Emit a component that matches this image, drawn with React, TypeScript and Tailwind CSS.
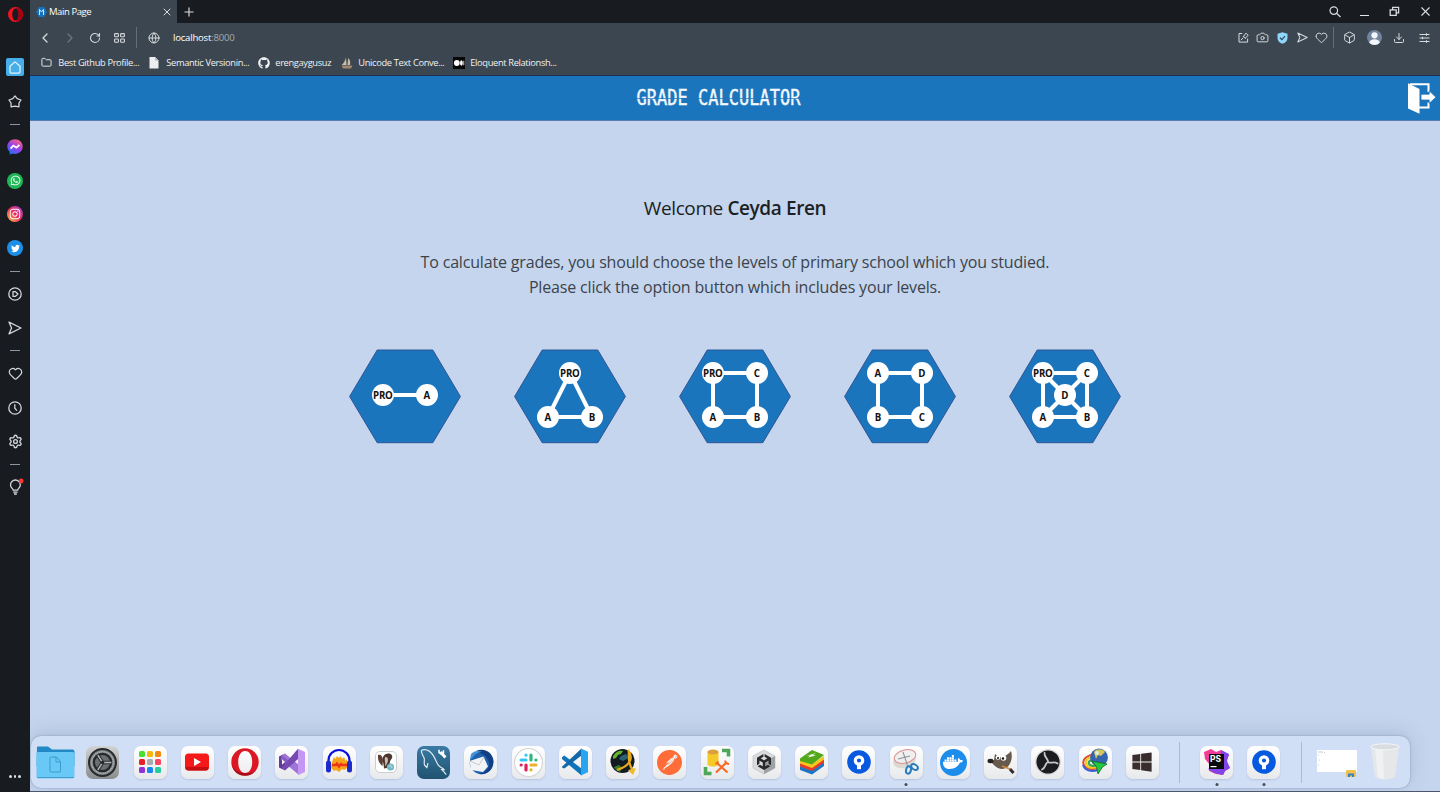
import React from "react";
import {
  FaWhatsapp, FaInstagram, FaTwitter, FaGithub, FaDocker, FaWindows, FaUnity,
} from "react-icons/fa6";
import { SiPostman } from "react-icons/si";
import {
  Box, Camera, ChevronLeft, ChevronRight, Download, Globe, Heart, Plus, Search, Settings, X, RotateCw, Folder,
} from "lucide-react";

type Kids = { children?: React.ReactNode };

/* ---------- Sidebar ---------- */

const Slot = ({ children }: Kids) => (
  <div className="flex h-[33.7px] w-full shrink-0 items-center justify-center">{children}</div>
);
const Dash = () => (
  <div className="flex h-[12.300px] w-full shrink-0 items-center justify-center">
    <div className="h-px w-2.5 bg-[#8f979e]" />
  </div>
);

function SendIcon({ size }: { size: number }) {
  return (
    <svg width={size} height={size} viewBox="0 0 14 14" fill="none" stroke="currentColor" strokeWidth="1.3" strokeLinejoin="round">
      <path d="M1 1.2 13 7 1 12.8 3.6 7Z" />
    </svg>
  );
}

function Sidebar() {
  return (
    <aside className="flex h-full w-[30px] shrink-0 flex-col items-center bg-[#181c21] text-[#d3d7da]">
      <div className="flex h-[50.600px] w-full shrink-0 justify-center pt-[7px]">
        <svg width="15" height="15" viewBox="0 0 15 15">
          <path fillRule="evenodd" fill="#f2141f" d="M7.5 0a7.5 7.5 0 1 0 0 15 7.5 7.5 0 0 0 0-15Zm0 1.5c1.9 0 3.2 2.6 3.2 6s-1.3 6-3.2 6-3.2-2.6-3.2-6 1.3-6 3.2-6Z" />
          <path fill="#a70014" d="M7.5 1.5c1.9 0 3.2 2.6 3.2 6s-1.3 6-3.2 6a5 5 0 0 0 2.6 1 7.5 7.5 0 0 0 0-14 5 5 0 0 0-2.6 1Z" />
        </svg>
      </div>
      <Slot>
        <div className="flex size-[18px] items-center justify-center rounded-[2px] bg-[#46aee9]">
          <svg width="12" height="13" viewBox="0 0 12 13" fill="none" stroke="#e4f4fd" strokeWidth="1.2" strokeLinejoin="round">
            <path d="M6 .9 11 5.3V11q0 1.1-1.1 1.1H2.1Q1 12.100 1 11V5.300Z" />
          </svg>
        </div>
      </Slot>
      <Slot>
        <svg width="14" height="13" viewBox="0 0 14 13" fill="none" stroke="currentColor" strokeWidth="1.3" strokeLinejoin="round">
          <path d="M7 .9 9.200 3.600 13 5 11 8 10.900 11.800 7 11.200 3.100 11.800 3 8 1 5 4.800 3.600Z" />
        </svg>
      </Slot>
      <Dash />
      <Slot>
        <svg width="16" height="16" viewBox="0 0 16 16">
          <defs>
            <linearGradient id="msg" x1="0.2" y1="1" x2="0.8" y2="0">
              <stop offset="0" stopColor="#1479f0" /><stop offset=".5" stopColor="#9a3ff0" /><stop offset="1" stopColor="#ff6470" />
            </linearGradient>
          </defs>
          <path fill="url(#msg)" d="M8 .3C3.600.3.300 3.400.300 7.600c0 2.200.9 4 2.400 5.300V15.800l2.600-1.200c.9.2 1.700.3 2.700.3 4.400 0 7.700-3.100 7.700-7.300S12.400.3 8 .3Z" />
          <path fill="none" stroke="#fff" strokeWidth="1.800" d="M3.600 9.600 6.300 6.600 9.400 8.600 12.400 5.800" />
        </svg>
      </Slot>
      <Slot>
        <div className="flex size-4 items-center justify-center rounded-full bg-[#1fb755] text-white"><FaWhatsapp size={11} /></div>
      </Slot>
      <Slot>
        <div className="flex size-4 items-center justify-center rounded-full bg-linear-to-tr from-[#fdbb2d] via-[#e8245c] to-[#9b30d0] text-white"><FaInstagram size={12} /></div>
      </Slot>
      <Slot>
        <div className="flex size-4 items-center justify-center rounded-full bg-[#1b8fe8] text-white"><FaTwitter size={9} /></div>
      </Slot>
      <Dash />
      <Slot>
        <svg width="14" height="14" viewBox="0 0 14 14" fill="none" stroke="currentColor" strokeWidth="1.300" strokeLinejoin="round">
          <circle cx="7" cy="7" r="6.200" /><path d="M5 4.600h2.200L10 7 7.200 9.400H5Z" />
        </svg>
      </Slot>
      <Slot><SendIcon size={14} /></Slot>
      <Dash />
      <Slot><Heart size={15} strokeWidth={2} /></Slot>
      <Slot>
        <svg width="14" height="14" viewBox="0 0 14 14" fill="none" stroke="currentColor" strokeWidth="1.300">
          <circle cx="7" cy="7" r="6.200" /><path d="M6.800 3.200V7.200L9 9.600" />
        </svg>
      </Slot>
      <Slot><Settings size={15} strokeWidth={2.200} /></Slot>
      <Dash />
      <Slot>
        <svg width="18" height="18" viewBox="0 0 18 18" fill="none" stroke="currentColor" strokeWidth="1.300">
          <path d="M7.200 12.200C7.200 10.600 4.500 9.700 4.500 6.900a4.900 4.900 0 0 1 9.800 0c0 2.800-2.700 3.700-2.700 5.300Z" />
          <path d="M7.200 14.200h4.400M8 16h2.800" />
          <circle cx="15.200" cy="3" r="2.400" fill="#ff3434" stroke="none" />
        </svg>
      </Slot>
      <div className="mt-auto mb-[14.500px] flex gap-[2px]">
        <i className="size-[2.500px] rounded-full bg-[#d8dcdf]" />
        <i className="size-[2.500px] rounded-full bg-[#d8dcdf]" />
        <i className="size-[2.500px] rounded-full bg-[#d8dcdf]" />
      </div>
    </aside>
  );
}

/* ---------- Browser chrome ---------- */

function TabBar() {
  return (
    <div className="flex h-[23px] shrink-0 items-center bg-[#181b1f] text-[#d9dcdf]">
      <div className="flex h-full w-[147px] items-center bg-[#3b4650] pl-1.5">
        <svg width="11" height="10" viewBox="0 0 11 10">
          <path fill="#1873bd" d="M2.800 0h5.400L11 5 8.200 10H2.800L0 5Z" />
          <path stroke="#cfe5f7" fill="none" d="M3.500 8V2.500L5.500 5l2-2.500V8" />
        </svg>
        <span className="mt-[2px] ml-[2px] flex-1 text-[9.500px] tracking-[-0.420px] whitespace-nowrap text-white">Main Page</span>
        <X size={12} strokeWidth={2} className="mr-[4px]" />
      </div>
      <Plus size={14} strokeWidth={2} className="ml-[5px]" />
      <div className="ml-auto flex items-center">
        <svg width="12" height="12" viewBox="0 0 12 12" fill="none" stroke="currentColor" strokeWidth="1.200">
          <circle cx="4.800" cy="4.600" r="3.800" /><path d="M7.500 7.300 11.500 11" />
        </svg>
        <div className="mt-[8px] ml-[19px] h-px w-[9px] bg-[#e4e6e8]" />
        <svg className="ml-[20.500px]" width="11" height="11" viewBox="0 0 11 11" fill="none" stroke="currentColor" strokeWidth="1.300">
          <path d="M1.200 3.800h6v5.600h-6zM3.600 3.800V1.400h6v5.400H7.200" />
        </svg>
        <X size={15} strokeWidth={1.800} className="mr-[7.500px] ml-[17.500px]" />
      </div>
    </div>
  );
}

function Toolbar() {
  return (
    <div className="flex h-[29px] shrink-0 items-center bg-[#3b4650] text-[#d6dadd]">
      <ChevronLeft size={16} strokeWidth={1.900} className="ml-[7px]" />
      <ChevronRight size={16} strokeWidth={1.900} className="ml-[9px] text-[#6d7780]" />
      <RotateCw size={12} strokeWidth={2.200} className="ml-[11px]" />
      <svg className="ml-[13px]" width="11" height="10" viewBox="0 0 11 10" fill="none" stroke="currentColor" strokeWidth="1.100">
        <rect x=".6" y=".6" width="3.800" height="3.200" rx=".8" /><rect x="6.600" y=".6" width="3.800" height="3.200" rx=".8" />
        <rect x=".6" y="6" width="3.800" height="3.200" rx=".8" /><rect x="6.600" y="6" width="3.800" height="3.200" rx=".8" />
      </svg>
      <div className="ml-[11px] h-[21px] w-px bg-[#646e77]" />
      <Globe size={12} strokeWidth={2} className="ml-[11px]" />
      <span className="mt-[2px] ml-[13px] text-[9.600px] tracking-[-0.230px] whitespace-nowrap text-white">localhost<span className="text-[#a4acb3]">:8000</span></span>
      <div className="ml-auto flex items-center">
        <svg width="11" height="11" viewBox="0 0 11 11" fill="none" stroke="currentColor" strokeWidth="1">
          <path d="M4.200 1.500H1v8.600h8.600V6.600M3 8.200l2.200-2.500M5 4l2.600 2.700M5.500 4.300 8 1.200l2.200 2.200L7.200 6" />
        </svg>
        <Camera size={13} strokeWidth={1.800} className="ml-[7.500px]" />
        <svg className="ml-[8px]" width="11" height="12" viewBox="0 0 11 12">
          <path fill="#8fd5fb" d="M5.500.2 10.500 1.800V6c0 2.900-2.200 4.900-5 5.800C2.700 10.900.5 8.900.5 6V1.800Z" />
          <path d="M3 5.800 4.900 7.600 8 4.200" fill="none" stroke="#2c465a" strokeWidth="1.200" />
        </svg>
        <span className="ml-[9px]"><SendIcon size={11} /></span>
        <Heart size={13} strokeWidth={1.800} className="ml-[7px]" />
        <div className="ml-[5px] h-[21px] w-px bg-[#646e77]" />
        <Box size={13} strokeWidth={1.800} className="ml-[9px]" />
        <svg className="ml-[11px]" width="15" height="15" viewBox="0 0 15 15">
          <clipPath id="av"><circle cx="7.500" cy="7.500" r="7.500" /></clipPath>
          <g clipPath="url(#av)"><rect width="15" height="15" fill="#70849b" /><circle cx="7.500" cy="5.300" r="3.100" fill="#f2f6fb" /><ellipse cx="7.500" cy="13.500" rx="5.600" ry="4.300" fill="#f2f6fb" /></g>
        </svg>
        <Download size={12} strokeWidth={2} className="ml-[11px]" />
        <svg className="mr-[10px] ml-[14px]" width="11" height="10" viewBox="0 0 11 10" fill="none" stroke="currentColor" strokeWidth="1.100">
          <path d="M.5 1.500h10M.5 5h10M.5 8.500h10M7.500.2v2.600M3.500 3.700v2.600M7.500 7.200v2.600" />
        </svg>
      </div>
    </div>
  );
}

const Mark = ({ icon, text, cls }: { icon: React.ReactNode; text: string; cls: string }) => (
  <div className={"flex shrink-0 items-center " + cls}>
    <span className="flex w-[17.300px] shrink-0">{icon}</span>
    <span className="text-[9.300px] tracking-[-0.350px] whitespace-nowrap">{text}</span>
  </div>
);

function Bookmarks() {
  return (
    <div className="flex h-[24px] shrink-0 items-center border-b border-[#1d2f4f] bg-[#3b4650] pb-[2px] pl-[11px] text-[#f0f2f4]">
      <Mark cls="w-[108px]" icon={<Folder size={11} strokeWidth={2} />} text="Best Github Profile..." />
      <Mark cls="w-[109px]" icon={<svg width="10" height="12" viewBox="0 0 10 12"><path fill="#eceeef" d="M.5 0h5.700L9.500 3.500V11.500H.5Z" /><path fill="#aeb4b9" d="M6.200 0v3.500h3.300Z" /></svg>} text="Semantic Versionin..." />
      <Mark cls="w-[83px]" icon={<FaGithub size={12} />} text="erengaygusuz" />
      <Mark cls="w-[112px]" icon={<svg width="12" height="12" viewBox="0 0 12 12"><path fill="#c9bba8" d="M5 .5 5.600 8H.7C2.800 6 4.200 4 5 .5ZM7.200 1c2 2 2.400 4.600 1.800 7H6.500Z" /><path fill="#a08870" d="M.5 8.500h11L10 11.500H2Z" /></svg>} text="Unicode Text Conve..." />
      <Mark cls="" icon={<svg width="12" height="12" viewBox="0 0 12 12"><rect width="12" height="12" fill="#060606" /><circle cx="3.800" cy="6" r="2.900" fill="#fff" /><ellipse cx="8.400" cy="6" rx="1.400" ry="2.700" fill="#fff" /><rect x="10.400" y="3.700" width=".8" height="4.600" fill="#fff" /></svg>} text="Eloquent Relationsh..." />
    </div>
  );
}

/* ---------- Page ---------- */

function Header() {
  return (
    <header className="grid h-[45px] shrink-0 grid-cols-[1fr_auto_1fr] items-center border-b border-[#5a7cb5] bg-[#1b75bc]">
      <div />
      <h1 className="relative mr-[33px] font-['DejaVu_Sans_Mono',monospace] text-[17px] leading-none whitespace-nowrap text-[#f2f8fd] [-webkit-text-stroke:0.350px_#f2f8fd]">
        <span className="block scale-y-[1.220]">GRADE CALCULATOR</span>
        <span className="absolute top-[8px] left-0 h-px w-full bg-[#1b75bc]/70" />
      </h1>
      <svg className="mr-[4.500px] justify-self-end" width="28" height="31" viewBox="0 0 28 31">
        <path d="M2 1.200H20.500V9M20.500 19.500V24.500H11" fill="none" stroke="#fff" strokeWidth="2" />
        <path fill="#fff" d="M0 .2 11.500 6V30.800L0 25.400Z" />
        <path fill="#fff" stroke="#1b75bc" strokeWidth=".8" d="M13 11.200h8.200V7.800L28 14.200l-6.800 6.200V17H13Z" />
      </svg>
    </header>
  );
}

type Node = [string, number, number];
type Graph = { nodes: Node[]; edges: [number, number][] };

const L = 34, C = 56, R = 78, T = 24, M = 46, B = 68;

const graphs: Graph[] = [
  { nodes: [["PRO", L, M], ["A", R, M]], edges: [[0, 1]] },
  { nodes: [["PRO", C, T], ["A", L, B], ["B", R, B]], edges: [[0, 1], [1, 2], [2, 0]] },
  { nodes: [["PRO", L, T], ["C", R, T], ["B", R, B], ["A", L, B]], edges: [[0, 1], [1, 2], [2, 3], [3, 0]] },
  { nodes: [["A", L, T], ["D", R, T], ["C", R, B], ["B", L, B]], edges: [[0, 1], [1, 2], [2, 3], [3, 0]] },
  { nodes: [["PRO", L, T], ["C", R, T], ["B", R, B], ["A", L, B], ["D", C, M]], edges: [[0, 1], [1, 2], [2, 3], [3, 0], [0, 2], [1, 3]] },
];

function Hexagon({ nodes, edges }: Graph) {
  return (
    <button className="block">
      <svg width="112" height="95" viewBox="0 0 112 95">
        <path d="M28.200 1H83.800L111.400 47.500 83.800 93.700H28.200L.6 47.500Z" fill="#1b75bc" stroke="#2f5597" />
        {edges.map(([a, b]) => (
          <line key={a + "-" + b} x1={nodes[a][1]} y1={nodes[a][2]} x2={nodes[b][1]} y2={nodes[b][2]} stroke="#fff" strokeWidth="4" />
        ))}
        {nodes.map(([label, x, y]) => (
          <g key={label}>
            <circle cx={x} cy={y} r="11" fill="#fff" />
            <text x={x - 0.2} y={y + 3.500} textAnchor="middle" fill="#111" className="font-['Open_Sans',sans-serif] text-[9.700px] font-bold tracking-[-0.250px]">{label}</text>
          </g>
        ))}
      </svg>
    </button>
  );
}

/* ---------- Dock ---------- */

const Item = ({ children, bare, running }: Kids & { bare?: boolean; running?: boolean }) => (
  <div className="relative flex h-full w-[47.250px] shrink-0 items-center justify-center">
    {bare ? children : (
      <div className="flex size-[33px] items-center justify-center rounded-[7px] bg-linear-to-b from-white to-[#e8e9ec] shadow-[0_1px_2px_rgba(80,90,110,0.200)]">{children}</div>
    )}
    {running && <i className="absolute bottom-[2px] left-1/2 size-[3px] -translate-x-1/2 rounded-full bg-[#454b55]" />}
  </div>
);
const Draw = ({ children, s = 28 }: Kids & { s?: number }) => (
  <svg width={s} height={s} viewBox="0 0 28 28" fill="none">{children}</svg>
);
const Divider = ({ cls }: { cls: string }) => (
  <div className={"flex h-full shrink-0 items-center justify-center " + cls}><div className="h-[41px] w-px bg-[#adbad0]" /></div>
);
const Pin = () => (
  <Draw>
    <circle cx="14" cy="14" r="11.800" fill="#0759df" />
    <circle cx="14" cy="12.500" r="3.700" stroke="#fff" strokeWidth="3.200" />
    <rect x="12" y="16" width="4" height="5.200" fill="#fff" />
  </Draw>
);

const tiles = ["#48df30", "#f4b90c", "#f18a10", "#e8202a", "#a8abb0", "#fa4660", "#9330d8", "#1488f2", "#27cda0"];

function Dock() {
  return (
    <nav className="mx-px mb-[3px] flex h-[52px] w-[1379px] items-center rounded-[10px] bg-[#d1dff6] pl-[1px] shadow-[0_0_2px_#8291ab,0_-3px_18px_rgba(95,115,150,0.250)]">
      <Item bare>
        <svg width="39" height="33" viewBox="0 0 39 33">
          <path fill="#218ac6" d="M1 1.500Q1 .5 2 .5H12L16 3.500H36.500Q38.500 3.500 38.500 5.500V20H.5Z" />
          <rect x=".5" y="6" width="38" height="26.500" rx="2" fill="#69c8f6" />
          <path d="M1 31.500h37" stroke="#429fce" />
          <path d="M15.500 11h5l4 4.500V25q0 1-1 1h-8q-1.500 0-1.500-1V12q0-1 1.500-1ZM20 11v5h4.500" fill="none" stroke="#399cd0" />
        </svg>
      </Item>
      <Item bare>
        <div className="flex size-[33px] items-center justify-center rounded-[7px] bg-linear-to-b from-[#d2d3d4] to-[#8b8c8e]">
          <Draw s={31}>
            <circle cx="14" cy="14" r="12.200" fill="#7e8184" stroke="#292c2f" strokeWidth="1.800" />
            <circle cx="14" cy="14" r="9.800" stroke="#b2b5b7" strokeWidth="1.300" strokeDasharray="1 .7" />
            <circle cx="14" cy="14" r="7.800" fill="#6c6f72" stroke="#26292c" strokeWidth="2" />
            <path d="M14 14H22M14 14 9.800 7.400M14 14 9.800 20.600" stroke="#2b2e31" strokeWidth="3.200" />
            <path d="M14 14H22M14 14 9.800 7.400M14 14 9.800 20.600" stroke="#b4b7b9" strokeWidth="1.300" />
            <circle cx="14" cy="14" r="1.600" fill="#26292c" />
          </Draw>
        </div>
      </Item>
      <Item>
        <div className="grid grid-cols-3 gap-[2px]">
          {tiles.map((c) => <i key={c} className="size-[6.200px] rounded-[1.500px]" style={{ background: c }} />)}
        </div>
      </Item>
      <Item><Draw><rect x="2" y="5.500" width="24" height="17" rx="3.500" fill="#f51919" /><path d="M2.500 19q0 3.500 3 3.500h17q3 0 3-3.500" fill="#c60f12" /><path d="M11 10v8l7-4Z" fill="#fff" /></Draw></Item>
      <Item><Draw><path fillRule="evenodd" fill="#dc1824" d="M14 .3a13.700 13.700 0 1 0 0 27.400A13.700 13.700 0 0 0 14 .3Zm.2 2.700c4.400 0 7 4.800 7 11s-2.600 11-7 11-7-4.800-7-11 2.600-11 7-11Z" /><path fill="#8e0613" d="M1 17C2 24 8 28 14 27.700c5 0 9-2 11.500-6-4 4-7.500 3.300-9.500 3C9 26 4 23 1 17Z" opacity=".65" /></Draw></Item>
      <Item><Draw><path fill="#613b99" d="M1 8.500 4 7l8 7-8 7-3-1.500Z" /><path fill="#8e60cf" d="m3.500 7 3.500-1.500L21 17v10L2.500 11.500Z" opacity=".85" /><path fill="#764ab1" d="M3 20.500 20 .8V11L7 22.500Z" /><path fill="#c696f5" d="m20 .8 7 3.200v20l-7 3.200Z" /><path fill="#f4f2f7" d="m4 11.300 3 2.700-3 2.700Z" /></Draw></Item>
      <Item><Draw><path fill="#f6a41c" d="m7 14 2-5 1.500 2L12 8l2 2 1.500-2L17 11l2-2 1.500 4L22 11v9l-3 2-2-1-3 3-3-2-2 1-3-3Z" /><path stroke="#ef341c" strokeWidth="2.300" d="M7 17h4l1-1.500 2 3 2-2.500 1 1h5" /><path d="M3.500 16V12.500a10.500 10.500 0 0 1 21 0v3.500" stroke="#0a10dc" strokeWidth="2.200" /><rect x="1" y="12.500" width="5" height="12" rx="2.500" fill="#1b2bcc" /><rect x="22" y="12.500" width="5" height="12" rx="2.500" fill="#1b2bcc" /></Draw></Item>
      <Item><Draw><rect x="3.500" y="3.500" width="21" height="21" rx="4.500" fill="#fff" stroke="#cdced0" /><path fill="#5c4035" d="M6 7c3-1 5 2 5 6l-.5 5c-3-2-5-6-4.500-11Z" /><path fill="#4a362e" d="M11 9c2-4 7-4.500 9-1.500 1 3-1 3-2 6 0 3-2 7-6 7 0-4-2-8-1-11.500Z" /><path fill="#cdbcae" d="M13 9.500c1-1 3 0 3 2s-1 5-3 7c1-4-1-6 0-9Z" /><circle cx="18.500" cy="19" r="3.600" fill="#6fb7c2" /><path d="m16.600 19 1.200-1.200h1.500l1 1.200-1 1.200" stroke="#d3eef2" strokeWidth=".8" /></Draw></Item>
      <Item bare>
        <div className="flex size-[33px] items-center justify-center rounded-[7px] bg-linear-to-b from-[#397aa5] to-[#20536f]">
          <Draw s={31}>
            <path d="M3 3c4-1.500 8 .5 11 5 2 3 2.500 6 4.500 8.500 1.500 2 4 2.500 5 4L21.500 20.500l2 2 2 2.500M3 3c0 3 1.500 4.500 2.500 7 .8 2-.5 4.500.5 6.500l2 2 1-4" stroke="#dbe8f0" strokeWidth="1.100" />
            <path d="m20.300 4.500 4.500 5" stroke="#fff" strokeWidth="2.600" />
            <path d="M19 2.500v2.500l2 1.500 2-1V3" stroke="#fff" strokeWidth="1.400" />
          </Draw>
        </div>
      </Item>
      <Item><Draw><circle cx="14.500" cy="14.500" r="11.800" fill="#1e62ae" /><path fill="#123e83" d="M9 3c9-4 17 2 17.500 10C26 23 19 27 12 26c9-2 12-9 9-14C19 7 14 5 9 3Z" /><path fill="#3f95d8" d="M4 6c3-3 7-4 11-2-4 0-7 2-9 5L3 12Z" /><path fill="#f2f3f6" d="m2.500 13 14-4.500 4.500 10-5 5.500-12-2Z" /><path stroke="#bdc3cc" strokeWidth=".9" d="m3 13 9 4 5-8" /></Draw></Item>
      <Item>
        <Draw s={31}>
          <circle cx="14" cy="14" r="12.600" fill="#fff" stroke="#d3d4d6" />
          <g transform="translate(1.400 1.400) scale(.9)" strokeWidth="3.200" strokeLinecap="round">
            <path d="M6.500 11.500h5M11.500 6.600v.1" stroke="#36c5f0" />
            <path d="M16.500 6.500v5M21.400 11.500h.1" stroke="#2eb67d" />
            <path d="M16.500 16.500h5M16.500 21.400v.1" stroke="#ecb22e" />
            <path d="M11.500 16.500v5M6.600 16.500h.1" stroke="#e01e5a" />
          </g>
        </Draw>
      </Item>
      <Item><Draw><path fill="#0f75bb" d="m1 9.200 2.300-1.800L20.500 20.500v7L1 11Z" /><path fill="#1268a9" d="M1 18.800 20.500.5v7L3.300 20.600 1 19.500Z" /><path fill="#29a5ef" d="m20 .5 7 3.300v20.400l-7 3.300Z" /></Draw></Item>
      <Item><Draw><circle cx="13.500" cy="13" r="12" fill="#121b21" /><path fill="#61b52b" d="M4 8c3-5 7-6 10-5l-2 3-3 1-2 3-3 1Z" /><path fill="#3d7a25" d="m5 19 5-2 3 3-2 4c-3-1-5-3-6-5Z" /><path fill="#296277" d="m12 8 5-2 2 4-5 3-4-2Z" /><path d="M19 2c6 8 2 16-11 20M20 3c-1 8 0 14 4 20" stroke="#e6a91c" strokeWidth="2.200" /><path fill="#f0b92a" d="m19 22 8-2-3 7Z" /></Draw></Item>
      <Item><SiPostman size={25} color="#ff6c37" /></Item>
      <Item><Draw><path d="M19 2.500h6.500v6M2.500 19v6.500h6" stroke="#50a658" strokeWidth="3.600" /><path fill="#f5c928" d="M4.500 4v13q5.500 3.500 11 0V4Z" /><ellipse cx="10" cy="4" rx="5.500" ry="2.500" fill="#dba03d" /><path d="m14 15 10.500 9.500M24 14 13 24.500" stroke="#f26c2a" strokeWidth="2.200" /><path d="m12.500 16 3-2.500M22 12.500l1 3 3 .5" stroke="#f26c2a" strokeWidth="1.800" /></Draw></Item>
      <Item><Draw><path fill="#dadbdc" stroke="#b9bbbd" strokeWidth=".6" d="m14 2 11 6v12l-11 6-11-6V8Z" /><path fill="#9fa2a5" d="M14 14 25 8v12l-11 6Z" /></Draw><FaUnity size={16} color="#28292b" className="absolute" /></Item>
      <Item><Draw><path fill="#1c75c7" d="m2 18 12 4 12-8v4L14 26.500 2 22Z" /><path fill="#e53c2a" d="m2 15 12 4 12-8v3.500L14 23 2 18.500Z" /><path fill="#f7c61c" d="m2 12 12 4 12-8v3.500L14 20 2 15.500Z" /><path fill="#52a818" d="M2 10.500 14 2l12 5-12 9.500L2 13Z" /><path fill="#fff" d="m8 8 10-3-3 2 3 .5-8 2 2-2Z" opacity=".9" /></Draw></Item>
      <Item><Pin /></Item>
      <Item running><Draw><ellipse cx="12.500" cy="12.500" rx="11.500" ry="7.500" fill="#dbd8d2" transform="rotate(-15 12.500 12.500)" /><ellipse cx="13" cy="8.500" rx="11" ry="6.500" fill="#efefef" stroke="#dc8f92" transform="rotate(-15 13 8.500)" /><path d="m11 4 5 15M6 11l12-3" stroke="#8d9398" strokeWidth="1.100" /><ellipse cx="16.500" cy="22" rx="2.400" ry="3.700" stroke="#287dbf" strokeWidth="2" transform="rotate(15 16.500 22)" /><ellipse cx="22.500" cy="19" rx="3.700" ry="2.400" stroke="#287dbf" strokeWidth="2" transform="rotate(35 22.500 19)" /></Draw></Item>
      <Item><div className="flex size-[27px] items-center justify-center rounded-full bg-[#1d8dec] text-white"><FaDocker size={20} /></div></Item>
      <Item><Draw><path fill="#67594e" d="m1 13 6-1 1-6 4 3c4 0 8-1 12-6 2 6 0 14-5 17-7 3-11-2-14-5Z" /><circle cx="11" cy="9.500" r="2.300" fill="#fff" /><circle cx="16.500" cy="10" r="2.800" fill="#fff" /><circle cx="11" cy="10" r="1" fill="#111" /><circle cx="16" cy="10.500" r="1.200" fill="#111" /><ellipse cx="3.500" cy="13" rx="3" ry="2.200" fill="#252220" /><path d="m15 18 8 3" stroke="#d08a34" strokeWidth="1.800" /><path d="m23 21 3.500 4" stroke="#303030" strokeWidth="3" /></Draw></Item>
      <Item><Draw><circle cx="14" cy="14" r="12.200" fill="#1b1c20" stroke="#d9d9dc" strokeWidth="1.300" /><g stroke="#c5c6c9" strokeWidth="1.800" strokeLinecap="round"><path d="M14 14C14.500 10.500 10 9.500 10.500 5" /><path d="M14 14C14.500 10.500 10 9.500 10.500 5" transform="rotate(120 14 14)" /><path d="M14 14C14.500 10.500 10 9.500 10.500 5" transform="rotate(240 14 14)" /></g></Draw></Item>
      <Item><Draw><path d="M15 7C7 6 1 11 2.500 16s9 7 16 3" stroke="#e5452a" strokeWidth="2" /><path d="M14 9C8 8 4 12 5 16s8 5 13 2" stroke="#efc91f" strokeWidth="2.200" /><path d="M13 11c-4 1-6 3-5 5s6 3 9 0" stroke="#36a64a" strokeWidth="2.200" /><path d="M2 17c2 6 9 7 15 5" stroke="#3b5fd8" strokeWidth="2" /><circle cx="18" cy="9.500" r="8.900" fill="#3565b0" /><path fill="#d4c65a" d="M13 4c3-4 9-3 11 0l-4 4-3-1-2 4Z" /><circle cx="16" cy="5" r="2" fill="#e9f2fa" opacity=".8" /><path fill="#23c83e" stroke="#12682a" strokeWidth=".8" d="m11 13 15 3-4.500 3L17 26l-1.500-7Z" /></Draw></Item>
      <Item><FaWindows size={22} color="#3a2d2e" /></Item>
      <Divider cls="w-[27px]" />
      <Item running><Draw><path fill="#f43b98" d="M1 4 8 1l5 3 5-2 8 5-3 6 4 7-5 3-2 4-7-1-7-3 1-6-5-6Z" /><path fill="#8144e6" d="m18 2 8 4-2 7 3 7-5 3-2 4-9-2-6-4 12-6Z" /><rect x="6" y="6" width="15" height="15" fill="#090a0c" /><rect x="7.500" y="18" width="6" height="1.200" fill="#fff" /><text x="7" y="14" fill="#fff" className="font-['Inter',sans-serif] text-[8.500px] font-bold">PS</text></Draw></Item>
      <Item running><Pin /></Item>
      <Divider cls="w-[27px]" />
      <div className="flex h-full w-[45.500px] shrink-0 items-center justify-center">
        <svg width="41" height="32" viewBox="0 0 41 32"><rect y="4" width="40" height="22" fill="#fff" /><path d="M1 6h5M1 9h1M2 14h1M1 19h1M7 6.500h1" stroke="#c9cbc9" /><rect x="29" y="24" width="10" height="7" rx="1" fill="#efc24d" /><path d="M31 31v-3.500h6V31h-2v-1.500h-2V31Z" fill="#3283c8" /></svg>
      </div>
      <div className="flex h-full w-[50px] shrink-0 items-center justify-center">
        <svg width="30" height="38" viewBox="0 0 30 38"><path fill="#e5e7e9" d="M.8 3 5 34q10 5.500 20 0L29.200 3Z" /><path fill="#f3f4f5" d="m5 6 3 28q3 2 6 2L13 6Z" opacity=".8" /><ellipse cx="15" cy="3.800" rx="14.200" ry="3" fill="#d9dce0" stroke="#f5f6f7" /></svg>
      </div>
    </nav>
  );
}

export default function App() {
  return (
    <div className="flex h-[792px] w-[1440px] overflow-hidden bg-[#181c21] font-['Open_Sans',sans-serif]">
      <Sidebar />
      <div className="flex min-w-0 flex-1 flex-col">
        <TabBar />
        <Toolbar />
        <Bookmarks />
        <Header />
        <main className="flex min-h-0 flex-1 flex-col overflow-hidden border-b border-[#4d566b] bg-[#c4d5ed]">
          <section className="flex flex-col items-center pt-[72px] text-center">
            <p className="text-[19px] leading-[30px] tracking-[-0.400px] whitespace-nowrap text-[#1c1f24]">Welcome <span className="font-semibold">Ceyda Eren</span></p>
            <p className="mt-[27px] text-[16px] leading-[25px] tracking-[-0.172px] whitespace-nowrap text-[#3d434b]">
              To calculate grades, you should choose the levels of primary school which you studied.
              <br />
              Please click the option button which includes your levels.
            </p>
          </section>
          <div className="mt-[49px] flex justify-center gap-[53px]">
            {graphs.map((g, i) => <Hexagon key={i} {...g} />)}
          </div>
          <div className="mt-auto"><Dock /></div>
        </main>
      </div>
    </div>
  );
}
